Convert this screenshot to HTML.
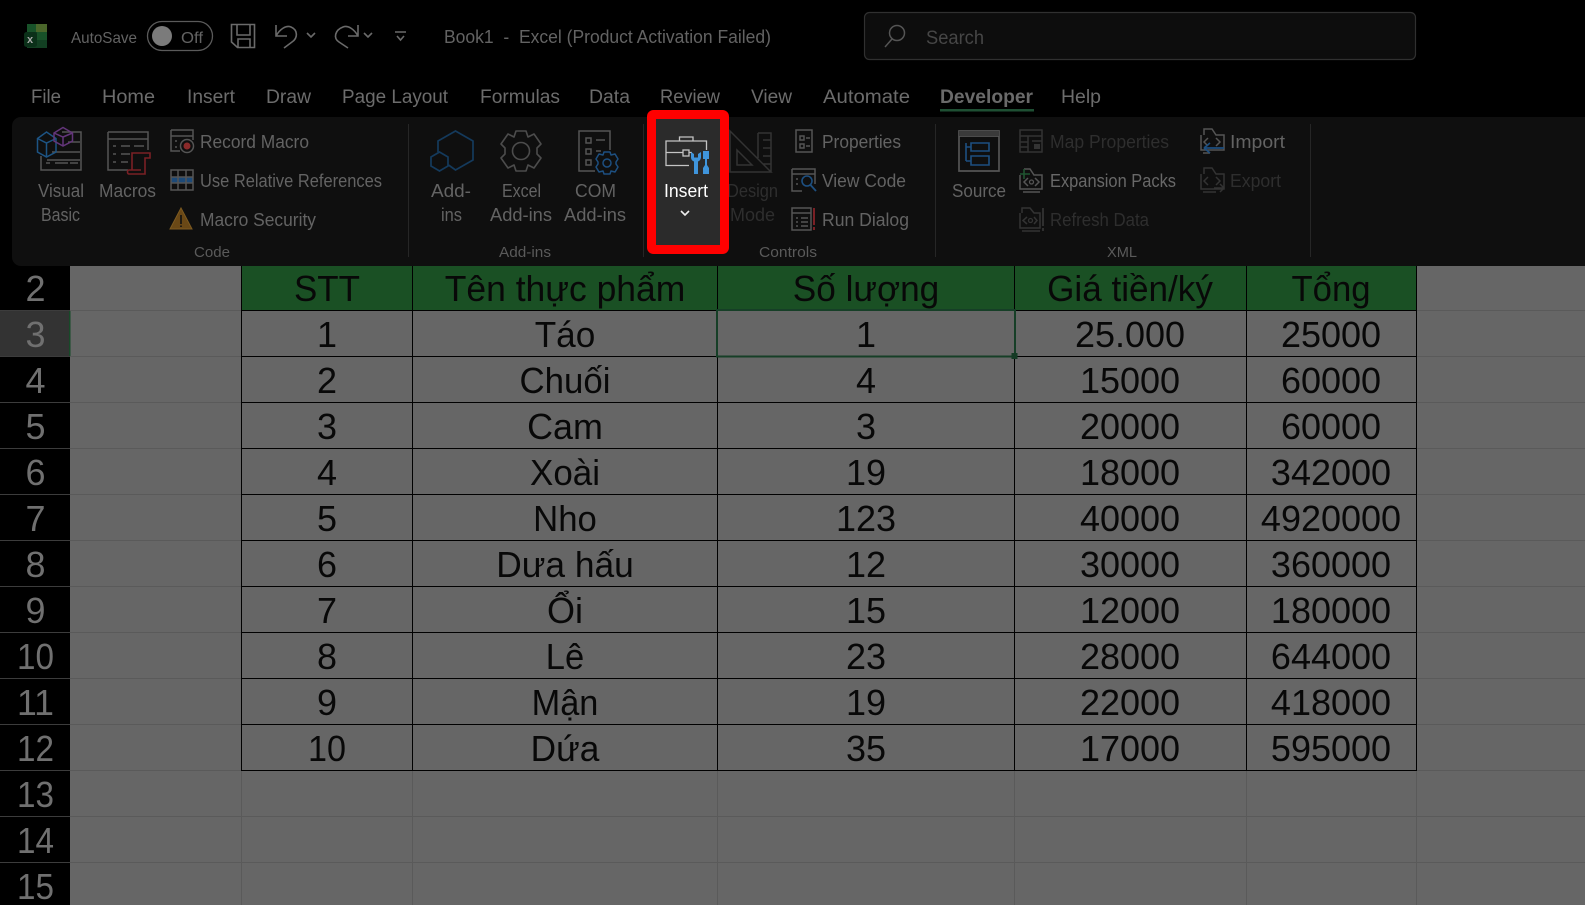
<!DOCTYPE html>
<html lang="vi"><head><meta charset="utf-8"><title>Excel</title>
<style>
html,body{margin:0;padding:0;background:#000;width:1585px;height:905px;overflow:hidden}
svg{display:block}
text{font-family:"Liberation Sans",sans-serif}
.t{font-size:19px;fill:#6c6c6c}
.r{font-size:18px;fill:#636363}
.d{font-size:18px;fill:#2e2e2e}
.g{font-size:15px;fill:#5a5a5a}
.c{font-size:36px;fill:#080808;text-anchor:middle}
.h{font-size:36px;fill:#707070;text-anchor:middle}
.i{fill:none;stroke:#555;stroke-width:1.5}
.x{fill:none;stroke:#333;stroke-width:1.5}
.q{fill:none;stroke:#6a6a6a;stroke-width:1.6}
.gl{stroke:#5a5a5a;stroke-width:1}
.bl{stroke:#000;stroke-width:1;shape-rendering:crispEdges}
</style></head><body>
<svg width="1585" height="905" viewBox="0 0 1585 905" xmlns="http://www.w3.org/2000/svg">
<rect width="1585" height="905" fill="#000"/>

<!-- sheet -->
<rect x="70" y="266" width="1515" height="639" fill="#666"/>
<rect x="241" y="266" width="1175" height="44" fill="#1a5024"/>
<rect x="0" y="311" width="70" height="45" fill="#333"/>
<rect x="69" y="311" width="1.5" height="45" fill="#174a28"/>

<!-- gridlines -->
<g class="gl">
<path d="M70 310.500H241M70 356.500H241M70 402.500H241M70 448.500H241M70 494.500H241M70 540.500H241M70 586.500H241M70 632.500H241M70 678.500H241M70 724.500H241"/>
<path d="M1416 310.500H1585M1416 356.500H1585M1416 402.500H1585M1416 448.500H1585M1416 494.500H1585M1416 540.500H1585M1416 586.500H1585M1416 632.500H1585M1416 678.500H1585M1416 724.500H1585"/>
<path d="M70 770.500H1585M70 816.500H1585M70 862.500H1585"/>
<path d="M241.500 771V905M412.500 771V905M717.500 771V905M1014.500 771V905M1246.500 771V905M1416.500 771V905"/>
</g>
<path d="M0 310.500H70M0 356.500H70M0 402.500H70M0 448.500H70M0 494.500H70M0 540.500H70M0 586.500H70M0 632.500H70M0 678.500H70M0 724.500H70M0 770.500H70M0 816.500H70M0 862.500H70" stroke="#3c3c3c" stroke-width="1"/>

<!-- table borders -->
<g class="bl">
<path d="M241.500 266V771M412.500 266V771M717.500 266V771M1014.500 266V771M1246.500 266V771M1416.500 266V771"/>
<path d="M241 310.500H1417M241 356.500H1417M241 402.500H1417M241 448.500H1417M241 494.500H1417M241 540.500H1417M241 586.500H1417M241 632.500H1417M241 678.500H1417M241 724.500H1417M241 770.500H1417"/>
</g>
<rect x="717" y="310" width="298" height="46.500" fill="none" stroke="#163f27" stroke-width="2"/>
<rect x="1011.500" y="353" width="6" height="6" fill="#143a24"/>

<!-- row numbers -->
<text class="h" x="35.500" y="301">2</text>
<text class="h" x="35.500" y="347">3</text>
<text class="h" x="35.500" y="393">4</text>
<text class="h" x="35.500" y="439">5</text>
<text class="h" x="35.500" y="485">6</text>
<text class="h" x="35.500" y="531">7</text>
<text class="h" x="35.500" y="577">8</text>
<text class="h" x="35.500" y="623">9</text>
<text class="h" x="35.500" y="669" textLength="37" lengthAdjust="spacingAndGlyphs">10</text>
<text class="h" x="35.500" y="715" textLength="37" lengthAdjust="spacingAndGlyphs">11</text>
<text class="h" x="35.500" y="761" textLength="37" lengthAdjust="spacingAndGlyphs">12</text>
<text class="h" x="35.500" y="807" textLength="37" lengthAdjust="spacingAndGlyphs">13</text>
<text class="h" x="35.500" y="853" textLength="37" lengthAdjust="spacingAndGlyphs">14</text>
<text class="h" x="35.500" y="899" textLength="37" lengthAdjust="spacingAndGlyphs">15</text>

<!-- table content -->
<text class="c" x="327" y="301" textLength="66" lengthAdjust="spacingAndGlyphs">STT</text><text class="c" x="565" y="301" textLength="240.500" lengthAdjust="spacingAndGlyphs">Tên thực phẩm</text><text class="c" x="866" y="301" textLength="146.500" lengthAdjust="spacingAndGlyphs">Số lượng</text><text class="c" x="1130" y="301" textLength="165.800" lengthAdjust="spacingAndGlyphs">Giá tiền/ký</text><text class="c" x="1331" y="301" textLength="79" lengthAdjust="spacingAndGlyphs">Tổng</text>
<text class="c" x="327" y="347">1</text><text class="c" x="565" y="347" textLength="60.600" lengthAdjust="spacingAndGlyphs">Táo</text><text class="c" x="866" y="347">1</text><text class="c" x="1130" y="347">25.000</text><text class="c" x="1331" y="347">25000</text>
<text class="c" x="327" y="393">2</text><text class="c" x="565" y="393" textLength="91" lengthAdjust="spacingAndGlyphs">Chuối</text><text class="c" x="866" y="393">4</text><text class="c" x="1130" y="393">15000</text><text class="c" x="1331" y="393">60000</text>
<text class="c" x="327" y="439">3</text><text class="c" x="565" y="439" textLength="75.800" lengthAdjust="spacingAndGlyphs">Cam</text><text class="c" x="866" y="439">3</text><text class="c" x="1130" y="439">20000</text><text class="c" x="1331" y="439">60000</text>
<text class="c" x="327" y="485">4</text><text class="c" x="565" y="485" textLength="70" lengthAdjust="spacingAndGlyphs">Xoài</text><text class="c" x="866" y="485">19</text><text class="c" x="1130" y="485">18000</text><text class="c" x="1331" y="485">342000</text>
<text class="c" x="327" y="531">5</text><text class="c" x="565" y="531" textLength="63.700" lengthAdjust="spacingAndGlyphs">Nho</text><text class="c" x="866" y="531">123</text><text class="c" x="1130" y="531">40000</text><text class="c" x="1331" y="531">4920000</text>
<text class="c" x="327" y="577">6</text><text class="c" x="565" y="577" textLength="137.500" lengthAdjust="spacingAndGlyphs">Dưa hấu</text><text class="c" x="866" y="577">12</text><text class="c" x="1130" y="577">30000</text><text class="c" x="1331" y="577">360000</text>
<text class="c" x="327" y="623">7</text><text class="c" x="565" y="623">Ổi</text><text class="c" x="866" y="623">15</text><text class="c" x="1130" y="623">12000</text><text class="c" x="1331" y="623">180000</text>
<text class="c" x="327" y="669">8</text><text class="c" x="565" y="669" textLength="38.400" lengthAdjust="spacingAndGlyphs">Lê</text><text class="c" x="866" y="669">23</text><text class="c" x="1130" y="669">28000</text><text class="c" x="1331" y="669">644000</text>
<text class="c" x="327" y="715">9</text><text class="c" x="565" y="715" textLength="66.700" lengthAdjust="spacingAndGlyphs">Mận</text><text class="c" x="866" y="715">19</text><text class="c" x="1130" y="715">22000</text><text class="c" x="1331" y="715">418000</text>
<text class="c" x="327" y="761" textLength="38" lengthAdjust="spacingAndGlyphs">10</text><text class="c" x="565" y="761" textLength="68.700" lengthAdjust="spacingAndGlyphs">Dứa</text><text class="c" x="866" y="761">35</text><text class="c" x="1130" y="761">17000</text><text class="c" x="1331" y="761">595000</text>

<!-- title bar -->
<path d="M27 24H47V48H27Z" fill="#123f22"/><path d="M27 24H36V32H27Z" fill="#185229"/><path d="M36 24H47V32H36Z" fill="#4a662a"/><path d="M37 32H47V40H37Z" fill="#185229"/>
<rect x="24" y="32" width="13" height="15" rx="2.500" fill="#0b3019"/>
<text x="27" y="43" style="font-size:11px;font-weight:bold;fill:#a8a8a8">x</text>
<text class="r" x="71" y="43" textLength="66" lengthAdjust="spacingAndGlyphs" style="font-size:16px">AutoSave</text>
<rect x="147.500" y="21.500" width="65" height="29" rx="14.500" fill="none" stroke="#5a5a5a" stroke-width="1.300"/>
<circle cx="162" cy="36" r="10" fill="#7b7b7b"/>
<text class="r" x="181" y="43" textLength="22" lengthAdjust="spacingAndGlyphs" style="font-size:16px">Off</text>
<path class="q" d="M231.500 24.500H254.500V47.500H237.500L231.500 42ZM237 24.500V35H250V24.500M238 47.500V39H250V47.500"/>
<path class="q" d="M276 25V36H287M276 36C280 29 286 25 291 27C298 30 298 38 292 42L284 48"/>
<path class="q" d="M358 25V36H348M358 36C354 29 348 25 343 27C335 30 333 38 339 42L348 48"/>
<path class="q" d="M307 33L311 37L315 33M364 33L368 37L372 33"/>
<path class="q" d="M395 32H406M397 36L400.500 40L404 36"/>
<text class="r" x="444" y="43" textLength="327" lengthAdjust="spacingAndGlyphs">Book1&#160;&#160;-&#160;&#160;Excel (Product Activation Failed)</text>
<rect x="864.500" y="12.500" width="551" height="47" rx="5" fill="#0d0d0d" stroke="#303030" stroke-width="1.200"/>
<circle cx="897" cy="33" r="7.500" fill="none" stroke="#555" stroke-width="1.500"/><path d="M892 39L885 47" stroke="#555" stroke-width="1.500"/>
<text x="926" y="44" textLength="58" lengthAdjust="spacingAndGlyphs" style="font-size:19px;fill:#464646">Search</text>

<!-- tabs -->
<text class="t" x="31" y="103" textLength="30" lengthAdjust="spacingAndGlyphs">File</text>
<text class="t" x="102" y="103" textLength="53" lengthAdjust="spacingAndGlyphs">Home</text>
<text class="t" x="187" y="103" textLength="48" lengthAdjust="spacingAndGlyphs">Insert</text>
<text class="t" x="266" y="103" textLength="45" lengthAdjust="spacingAndGlyphs">Draw</text>
<text class="t" x="342" y="103" textLength="106" lengthAdjust="spacingAndGlyphs">Page Layout</text>
<text class="t" x="480" y="103" textLength="80" lengthAdjust="spacingAndGlyphs">Formulas</text>
<text class="t" x="589" y="103" textLength="41" lengthAdjust="spacingAndGlyphs">Data</text>
<text class="t" x="660" y="103" textLength="60" lengthAdjust="spacingAndGlyphs">Review</text>
<text class="t" x="751" y="103" textLength="41" lengthAdjust="spacingAndGlyphs">View</text>
<text class="t" x="823" y="103" textLength="87" lengthAdjust="spacingAndGlyphs">Automate</text>
<text class="t" x="940" y="103" textLength="93" lengthAdjust="spacingAndGlyphs" style="font-weight:bold;fill:#6a6a6a">Developer</text>
<text class="t" x="1061" y="103" textLength="40" lengthAdjust="spacingAndGlyphs">Help</text>
<rect x="940" y="109" width="94" height="2.500" fill="#1e4f33"/>

<!-- ribbon -->
<path d="M21 117H1585V266H21A9 9 0 0 1 12 257V126A9 9 0 0 1 21 117Z" fill="#0f0f0f"/>
<path d="M408.500 124V257M643.500 124V257M935.500 124V257M1310.500 124V257" stroke="#262626" stroke-width="1"/>

<!-- Visual Basic -->
<path class="i" d="M62 132H81V170H41V156M47 160H80M46 163H50M55 163H68M70 163H78M52 152H80M68 142H80"/>
<path d="M37.500 138.500L46.500 132L56 138.500V152L46.500 157L37.500 152ZM37.500 138.500L46.500 143L56 138.500M46.500 143V157" fill="none" stroke="#1d5484" stroke-width="1.500"/>
<path d="M54 133L63 127.500L72.500 133V141L63 146L54 141ZM54 133L63 137L72.500 133M63 137V146" fill="none" stroke="#63357a" stroke-width="1.500"/>
<text class="r" x="38" y="197" textLength="46" lengthAdjust="spacingAndGlyphs">Visual</text>
<text class="r" x="41" y="221" textLength="39" lengthAdjust="spacingAndGlyphs">Basic</text>
<!-- Macros -->
<path class="i" d="M108 132H148V150M128 170H108V132M108 139H148M113 146H116M121 146H130M134 146H144M113 154H116M121 154H130M113 162H116M121 162H128"/>
<path d="M132 170V153H150V158H145V174H129C127 174 127 170 129 170H141" fill="none" stroke="#7a2025" stroke-width="1.600"/>
<text class="r" x="99" y="197" textLength="57" lengthAdjust="spacingAndGlyphs">Macros</text>
<!-- Small -->
<path class="i" d="M171 130H193V140M171 130V151H180M171 136H193M175 141H177M175 147H177"/>
<circle cx="187" cy="146" r="6.500" fill="none" stroke="#555" stroke-width="1.500"/><circle cx="187" cy="146" r="3.500" fill="#8a2a2a"/>
<text class="r" x="200" y="148" textLength="109" lengthAdjust="spacingAndGlyphs">Record Macro</text>
<path d="M171 177H193V183H171Z" fill="#1d4a78"/>
<path class="i" d="M171 170H193V190H171ZM171 177H193M171 183H193M178 170V190M186 170V190"/>
<text class="r" x="200" y="187" textLength="182" lengthAdjust="spacingAndGlyphs">Use Relative References</text>
<path d="M181 208L192 229H170Z" fill="#6a4816" stroke="#7d5a20" stroke-width="1"/><path d="M181 215V224M181 225.500V227" stroke="#111" stroke-width="1.600"/>
<text class="r" x="200" y="226" textLength="116" lengthAdjust="spacingAndGlyphs">Macro Security</text>
<text class="g" x="194" y="257" textLength="36" lengthAdjust="spacingAndGlyphs">Code</text>

<!-- Add-ins -->
<path d="M438 152V141L455.500 131L473 141V160L455.500 170L448.500 165" fill="none" stroke="#143a5c" stroke-width="1.700"/>
<path d="M431 157L439.500 152L448 157V166L439.500 171L431 166Z" fill="none" stroke="#143a5c" stroke-width="1.700"/>
<text class="r" x="431" y="197" textLength="40" lengthAdjust="spacingAndGlyphs">Add-</text>
<text class="r" x="441" y="221" textLength="21" lengthAdjust="spacingAndGlyphs">ins</text>
<circle cx="521" cy="151" r="8.500" fill="none" stroke="#4c4c4c" stroke-width="1.600"/>
<path d="M516 131H526L528 137L534 134L541 144L537 148V154L541 158L534 168L528 165L526 171H516L514 165L508 168L501 158L505 154V148L501 144L508 134L514 137Z" fill="none" stroke="#4c4c4c" stroke-width="1.600" stroke-linejoin="round"/>
<text class="r" x="502" y="197" textLength="39" lengthAdjust="spacingAndGlyphs">Excel</text>
<text class="r" x="490" y="221" textLength="62" lengthAdjust="spacingAndGlyphs">Add-ins</text>
<path class="i" d="M595 171H579V131H610V150M586 138H591V143H586ZM586 149H591V154H586ZM586 160H591V165H586ZM596 140H605M596 151H601"/>
<circle cx="607" cy="163" r="4" fill="none" stroke="#1d4f80" stroke-width="1.500"/>
<path d="M604 152H610L611 155L615 154L618 159L616 162V164L618 167L615 172L611 171L610 174H604L603 171L599 172L596 167L598 164V162L596 159L599 154L603 155Z" fill="none" stroke="#1d4f80" stroke-width="1.500" stroke-linejoin="round"/>
<text class="r" x="575" y="197" textLength="41" lengthAdjust="spacingAndGlyphs">COM</text>
<text class="r" x="564" y="221" textLength="62" lengthAdjust="spacingAndGlyphs">Add-ins</text>
<text class="g" x="499" y="257" textLength="52" lengthAdjust="spacingAndGlyphs">Add-ins</text>

<!-- Controls -->
<path class="x" d="M730 131L771 172H730ZM737 150V165H752ZM758 133H771V172M758 133V158M763 140H771M763 148H771M763 156H771M763 164H771"/>
<text class="d" x="727" y="197" textLength="51" lengthAdjust="spacingAndGlyphs">Design</text>
<text class="d" x="730" y="221" textLength="45" lengthAdjust="spacingAndGlyphs">Mode</text>
<rect x="651.500" y="114.500" width="73" height="135" rx="2" fill="#2b2b2b" stroke="#f00" stroke-width="9"/>
<path d="M689 165.500H666V141H706.500V150M666 152.500H683M689 152.500H692M679.500 141V137H693V141" fill="none" stroke="#c4c4c4" stroke-width="1.300"/>
<rect x="683" y="150" width="6" height="6" fill="none" stroke="#c4c4c4" stroke-width="1.300"/>
<path d="M691 152V157.500A4.500 4.500 0 0 0 694 161.500V174H698V161.500A5 5 0 0 0 701 157.500V152L698 154V157.500H694V154Z" fill="#3f95dc"/>
<path d="M703 151H709V159H707V165L709 168V174H703V168L705 165V159H703Z" fill="#3f95dc"/>
<text x="664" y="197" textLength="44" lengthAdjust="spacingAndGlyphs" style="font-size:18px;fill:#fff">Insert</text>
<path d="M681 211L685 215L689 211" fill="none" stroke="#eee" stroke-width="1.600"/>
<path class="i" d="M796 130H812V152H796ZM800 136H804V140H800ZM800 144H804V148H800ZM806 138H810M806 146H810"/>
<text class="r" x="822" y="148" textLength="79" lengthAdjust="spacingAndGlyphs">Properties</text>
<path class="i" d="M792 169H815V184M792 169V191H802M792 174H815M796 179H798M796 184H798"/>
<circle cx="807" cy="181" r="5" fill="none" stroke="#1d4f80" stroke-width="1.600"/><path d="M810.500 185L816 191" stroke="#1d4f80" stroke-width="1.800"/>
<text class="r" x="822" y="187" textLength="84" lengthAdjust="spacingAndGlyphs">View Code</text>
<path class="i" d="M792 208H811V230H792ZM792 213H811M796 218H798M801 218H808M796 222H798M801 222H808M796 226H798M801 226H808"/>
<path d="M814 208V225M814 227V230" stroke="#7a2025" stroke-width="2"/>
<text class="r" x="822" y="226" textLength="87" lengthAdjust="spacingAndGlyphs">Run Dialog</text>
<text class="g" x="759" y="257" textLength="58" lengthAdjust="spacingAndGlyphs">Controls</text>

<!-- XML -->
<path d="M959 131H999V171H959ZM959 136H999" fill="none" stroke="#555" stroke-width="1.700"/>
<rect x="959" y="131" width="40" height="5" fill="#3a3a3a"/>
<path d="M971 143H989V151H971ZM971 156H989V165H971ZM966 143V161M966 147H971M966 161H971" fill="none" stroke="#1d4f80" stroke-width="1.600"/>
<text class="r" x="952" y="197" textLength="54" lengthAdjust="spacingAndGlyphs">Source</text>
<path class="x" d="M1020 130H1042V152H1020ZM1020 136H1042M1028 136V152M1020 142H1028M1020 147H1028M1032 141H1042"/>
<rect x="1034" y="144" width="6" height="5" fill="#333"/>
<text class="d" x="1050" y="148" textLength="119" lengthAdjust="spacingAndGlyphs">Map Properties</text>
<path class="i" d="M1020 175V189H1042V175H1034L1030 169H1024M1023 192H1040M1028 178L1024 182L1028 186M1035 178L1039 182L1035 186"/>
<circle cx="1031.500" cy="182" r="2" fill="none" stroke="#555" stroke-width="1.300"/>
<path d="M1020 174H1030M1024 169V179" stroke="#1f5530" stroke-width="1.600"/>
<text class="r" x="1050" y="187" textLength="126" lengthAdjust="spacingAndGlyphs" style="fill:#686868">Expansion Packs</text>
<path class="x" d="M1020 213V228H1040V213H1034L1030 208H1022V213M1022 231H1040M1027 217L1023 220.500L1027 224M1034 217L1037 220.500L1034 224"/>
<circle cx="1030.500" cy="220.500" r="2" fill="none" stroke="#333" stroke-width="1.300"/>
<path d="M1043 208V226M1043 228V231" stroke="#333" stroke-width="1.800"/>
<text class="d" x="1050" y="226" textLength="99" lengthAdjust="spacingAndGlyphs">Refresh Data</text>
<path class="i" d="M1201 135V150H1224V135H1216L1212 129H1204V135M1203 153H1210M1208 138L1204 142L1208 146M1216 138L1220 142L1216 146"/>
<path d="M1204 148H1224M1204 148L1210 143M1204 148L1210 153" fill="none" stroke="#1d4f80" stroke-width="1.700"/>
<text class="r" x="1230" y="148" textLength="55" lengthAdjust="spacingAndGlyphs">Import</text>
<path class="x" d="M1201 174V189H1224V174H1216L1212 168H1204V174M1203 192H1216M1208 177L1204 181L1208 185M1216 177L1220 181L1216 185M1214 188H1224M1220 184L1224 188L1220 192"/>
<text class="d" x="1230" y="187" textLength="51" lengthAdjust="spacingAndGlyphs">Export</text>
<text class="g" x="1107" y="257" textLength="30" lengthAdjust="spacingAndGlyphs">XML</text>
</svg>
</body></html>
